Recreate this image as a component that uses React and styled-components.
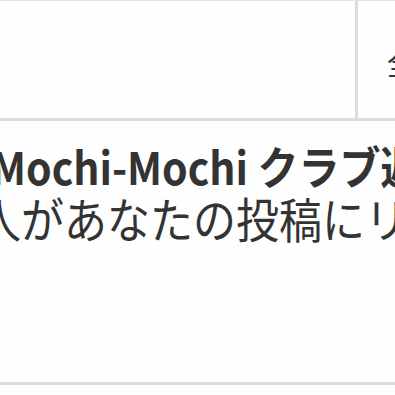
import styled, { createGlobalStyle } from "styled-components";

const GlobalStyle = createGlobalStyle`
  html, body {
    margin: 0;
    padding: 0;
    background: #fefefe;
  }
  body {
    font-family: "Noto Sans CJK JP", "Noto Sans", sans-serif;
    color: #333;
    overflow: hidden;
  }
`;

const Page = styled.div`
  width: 395px;
  height: 395px;
  overflow: hidden;
  display: flex;
  flex-direction: column;
`;

const Header = styled.div`
  display: grid;
  grid-template-columns: 355px 3px 1fr;
  height: 117px;
  border-top: 1px solid #e2e2e2;
  border-bottom: 3px solid #dcdcdc;
  box-sizing: content-box;
`;

const SearchArea = styled.div``;

const Divider = styled.div`
  background: #dcdcdc;
`;

const Tab = styled.div`
  display: flex;
  align-items: center;
  padding-left: 29px;
  padding-top: 4px;
  font-size: 28px;
  white-space: nowrap;
  color: #333;
  transform: scaleY(1.1);
`;

const Notice = styled.div`
  height: 264px;
  border-bottom: 3px solid #dcdcdc;
  overflow: hidden;
  padding-top: 22px;
  box-sizing: border-box;
`;

const Line = styled.div`
  white-space: nowrap;
  font-size: ${(p) => p.$size}px;
  line-height: ${(p) => p.$lh}px;
  font-weight: ${(p) => (p.$bold ? 700 : 400)};
  margin-left: ${(p) => p.$shift}px;
  color: #333;
  transform: scaleY(1.1);
  transform-origin: center bottom;
`;

export default function App() {
  return (
    <Page>
      <GlobalStyle />
      <Header>
        <SearchArea />
        <Divider />
        <Tab>全て</Tab>
      </Header>
      <Notice>
        <Line $bold $size={41} $lh={50} $shift={-9}>Mochi-Mochi クラブ週間ランキング</Line>
        <Line $size={43} $lh={54} $shift={-22}>人があなたの投稿にリアクションしました</Line>
      </Notice>
    </Page>
  );
}
